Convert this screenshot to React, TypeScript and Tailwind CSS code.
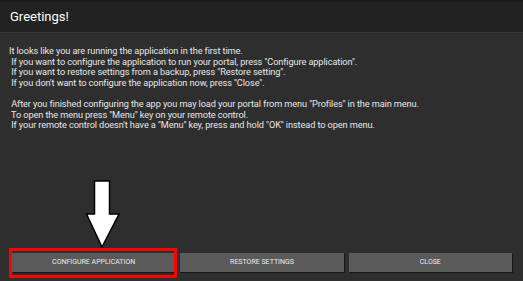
import React from 'react'

const lines = [
  'It looks like you are running the application in the first time.',
  ' If you want to configure the application to run your portal, press "Configure application".',
  ' If you want to restore settings from a backup, press "Restore setting".',
  ' If you don\'t want to configure the application now, press "Close".',
  '',
  ' After you finished configuring the app you may load your portal from menu "Profiles" in the main menu.',
  ' To open the menu press "Menu" key on your remote control.',
  ' If your remote control doesn\'t have a "Menu" key, press and hold "OK" instead to open menu.',
]

export default function App() {
  return (
    <div className="relative w-[523px] h-[281px] overflow-hidden bg-[#2e2e2e] flex flex-col font-['Roboto',sans-serif] text-[#e6e6e6]">
      <div className="h-[2px] bg-[#191919]" />
      {/* Title */}
      <div className="h-[31px] bg-[#222222] border-b border-[#383838] flex items-center pl-[10px]">
        <span className="text-[13px] text-white">Greetings!</span>
      </div>

      {/* Message */}
      <div className="flex-1 pl-[9px] pt-[13px] text-[9.2px] tracking-[-0.1px] leading-[10.6px] whitespace-pre">
        {lines.map((l, i) => (
          <div key={i} className="h-[10.6px]">{l}</div>
        ))}
      </div>

      {/* Buttons */}
      <div className="flex gap-[5px] pl-[12px] pr-[11px] pb-[9px]">
        {['CONFIGURE APPLICATION', 'RESTORE SETTINGS', 'CLOSE'].map((b) => (
          <button
            key={b}
            className="flex-1 h-[19px] bg-[#5a5a5a] text-[7px] text-[#ececec] shadow-[1px_1px_1px_rgba(0,0,0,0.5)]"
          >
            {b}
          </button>
        ))}
      </div>

      {/* Highlight around first button */}
      <div className="absolute left-[9px] top-[248px] w-[168px] h-[30px] border-[3px] border-[#ff0000]" />

      {/* Arrow */}
      <svg className="absolute left-[85px] top-[180px]" width="36" height="68" viewBox="0 0 36 68">
        <path
          d="M9.5 1 H24.5 V34 H34 L17 67 L1.5 34 H9.5 Z"
          fill="#ffffff"
          stroke="#000000"
          strokeWidth="1.5"
          strokeLinejoin="miter"
        />
      </svg>
    </div>
  )
}
